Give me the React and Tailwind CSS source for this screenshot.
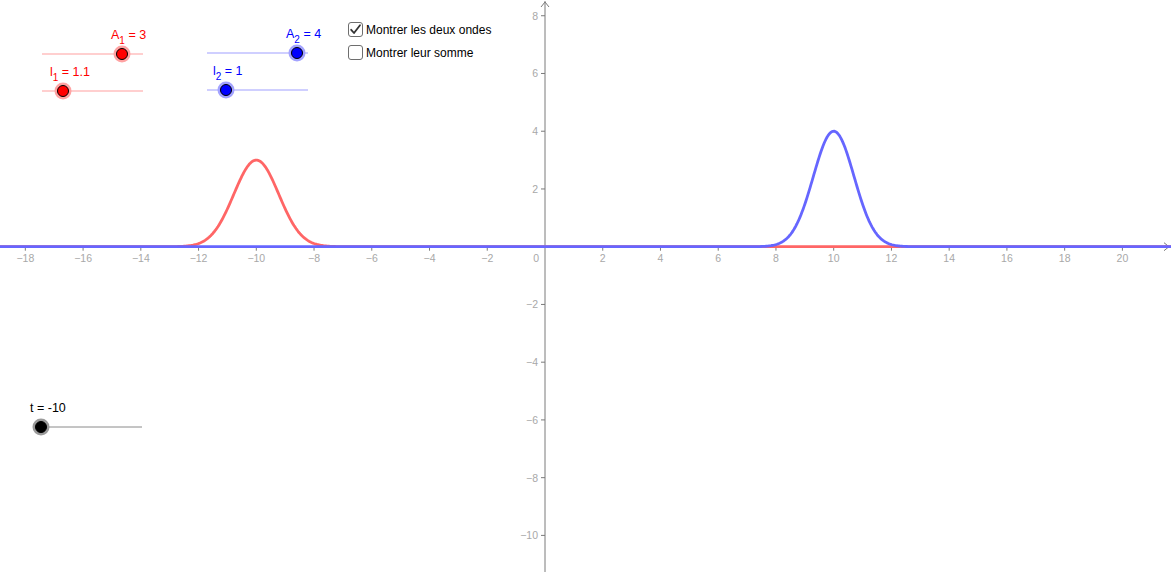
import React from "react";

const OX = 545;
const OY = 246.7;
const S = 28.87;
const W = 1171;
const H = 575;

const toX = (x) => OX + x * S;
const toY = (y) => OY - y * S;

function curve(f) {
  let d = "";
  for (let px = 0; px <= W; px += 1) {
    const x = (px - OX) / S;
    const y = toY(f(x));
    d += (px === 0 ? "M" : "L") + px + " " + y.toFixed(2) + " ";
  }
  return d;
}

const red = curve((x) => 3 * Math.exp(-(((x + 10) / 1.1) ** 2)));
const blue = curve((x) => 4 * Math.exp(-(((x - 10) / 1) ** 2)));

const xTicks = [-18, -16, -14, -12, -10, -8, -6, -4, -2, 2, 4, 6, 8, 10, 12, 14, 16, 18, 20];
const yTicks = [8, 6, 4, 2, -2, -4, -6, -8, -10];

function fmt(n) {
  return n < 0 ? "\u2212" + Math.abs(n) : String(n);
}

function Slider({ x1, x2, y, px, line, fill, halo, label, sub, value, lx, ly, color }) {
  return (
    <g>
      <line x1={x1} y1={y} x2={x2} y2={y} stroke={line} strokeWidth="1" />
      <circle cx={px} cy={y} r="8.5" fill={halo} />
      <circle cx={px} cy={y} r="5.5" fill={fill} stroke="#000" strokeWidth="1" />
      <text x={lx} y={ly} fill={color} fontSize="12.5" fontFamily="'Liberation Sans', Arial, sans-serif">
        {label}
        {sub && (
          <tspan fontSize="10" dy="5">
            {sub}
          </tspan>
        )}
        <tspan dy={sub ? -5 : 0}>{" = " + value}</tspan>
      </text>
    </g>
  );
}

function Check({ checked, children }) {
  return (
    <div className="flex items-center gap-[3px] h-[15px]">
      <div className="w-[15px] h-[15px] rounded-[3px] border border-[#6e6e6e] bg-white flex items-center justify-center">
        {checked && (
          <svg width="13" height="13" viewBox="0 0 13 13">
            <path d="M2.2 6.8 L5 10 L11 2.2" fill="none" stroke="#333" strokeWidth="1.8" strokeLinecap="round" strokeLinejoin="round" />
          </svg>
        )}
      </div>
      <span className="text-[12px] leading-none text-black">{children}</span>
    </div>
  );
}

export default function App() {
  return (
    <div className="relative w-[1171px] h-[575px] bg-white overflow-hidden" style={{ fontFamily: "'Liberation Sans', Arial, sans-serif" }}>
      <svg width={W} height={H} className="block">
        {/* axes */}
        <line x1="0" y1={OY} x2={W - 2} y2={OY} stroke="#7a7a7a" strokeWidth="1" />
        <line x1={OX} y1={572} x2={OX} y2="1" stroke="#7a7a7a" strokeWidth="1" />
        <path d={`M${W - 7} ${OY - 4} L${W - 2} ${OY} L${W - 7} ${OY + 4}`} fill="none" stroke="#7a7a7a" />
        <path d={`M${OX - 4} 7 L${OX} 2 L${OX + 4} 7`} fill="none" stroke="#7a7a7a" />
        {xTicks.map((t) => (
          <g key={"x" + t}>
            <line x1={toX(t)} y1={OY} x2={toX(t)} y2={OY + 4} stroke="#7a7a7a" />
            <text x={toX(t)} y={OY + 15} textAnchor="middle" fontSize="10.5" fill="#a8a8a8">
              {fmt(t)}
            </text>
          </g>
        ))}
        <text x={OX - 6} y={OY + 15} textAnchor="end" fontSize="10.5" fill="#a8a8a8">
          0
        </text>
        {yTicks.map((t) => (
          <g key={"y" + t}>
            <line x1={OX - 4} y1={toY(t)} x2={OX} y2={toY(t)} stroke="#7a7a7a" />
            <text x={OX - 7} y={toY(t) + 4} textAnchor="end" fontSize="10.5" fill="#a8a8a8">
              {fmt(t)}
            </text>
          </g>
        ))}

        {/* waves */}
        <path d={red} fill="none" stroke="#ff6666" strokeWidth="2.8" strokeLinejoin="round" />
        <path d={blue} fill="none" stroke="#6666ff" strokeWidth="2.8" strokeLinejoin="round" />

        {/* sliders */}
        <Slider x1={42} x2={143} y={54} px={122} line="#ff9f9f" fill="#ff0000" halo="#ffa3a3" label="A" sub="1" value="3" lx={111} ly={39} color="#ff0000" />
        <Slider x1={42} x2={143} y={91} px={63} line="#ff9f9f" fill="#ff0000" halo="#ffa3a3" label="l" sub="1" value="1.1" lx={50} ly={76} color="#ff0000" />
        <Slider x1={207} x2={308} y={53} px={297} line="#9f9fff" fill="#0000ff" halo="#a3a3ff" label="A" sub="2" value="4" lx={286} ly={38} color="#0000ff" />
        <Slider x1={207} x2={308} y={90} px={226} line="#9f9fff" fill="#0000ff" halo="#a3a3ff" label="l" sub="2" value="1" lx={213} ly={75} color="#0000ff" />
        <Slider x1={41} x2={142} y={427} px={41} line="#8a8a8a" fill="#000000" halo="#9a9a9a" label="t" value="-10" lx={30} ly={412} color="#000000" />
      </svg>

      <div className="absolute left-[348px] top-[22px] flex flex-col gap-[8px]">
        <Check checked>Montrer les deux ondes</Check>
        <Check>Montrer leur somme</Check>
      </div>
    </div>
  );
}
